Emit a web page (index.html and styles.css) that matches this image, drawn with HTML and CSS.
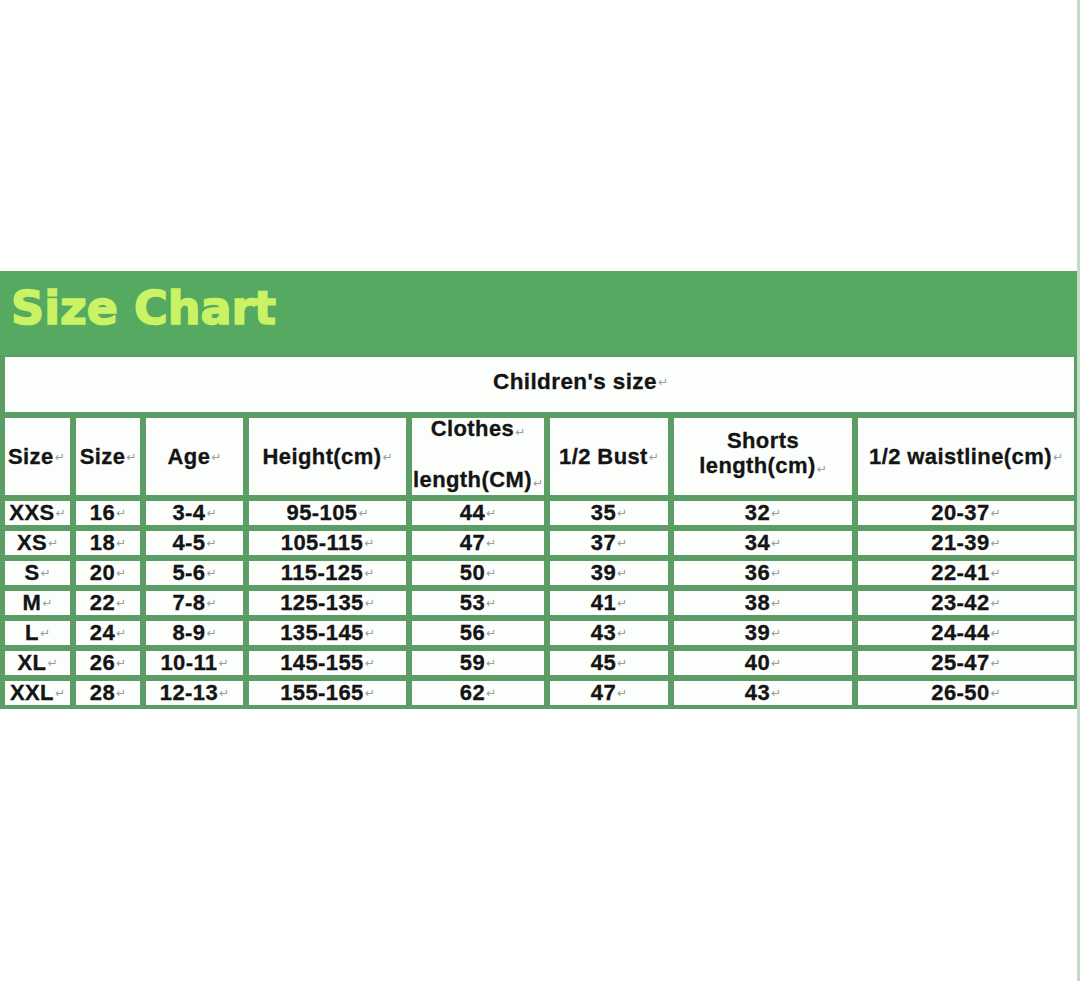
FILE: index.html
```html
<!DOCTYPE html>
<html lang="en">
<head>
<meta charset="utf-8">
<title>Size Chart</title>
<link rel="stylesheet" href="styles.css">
</head>
<body>
<div class="page">
  <main class="sheet">
    <div class="spacer"></div>
    <header class="band"><h1 class="title">Size Chart</h1></header>
    <div class="grid">
      <div class="cell caption">Children's size<span class="pm">↵</span></div>

      <div class="cell head head-left">Size<span class="pm">↵</span></div>
      <div class="cell head">Size<span class="pm">↵</span></div>
      <div class="cell head">Age<span class="pm">↵</span></div>
      <div class="cell head">Height(cm)<span class="pm">↵</span></div>
      <div class="cell head split"><span>Clothes<span class="pm">↵</span></span><span>length(CM)<span class="pm">↵</span></span></div>
      <div class="cell head">1/2 Bust<span class="pm">↵</span></div>
      <div class="cell head stack"><span>Shorts</span><span>length(cm)<span class="pm">↵</span></span></div>
      <div class="cell head">1/2 waistline(cm)<span class="pm">↵</span></div>

      <div class="cell">XXS<span class="pm">↵</span></div><div class="cell">16<span class="pm">↵</span></div><div class="cell">3-4<span class="pm">↵</span></div><div class="cell">95-105<span class="pm">↵</span></div><div class="cell">44<span class="pm">↵</span></div><div class="cell">35<span class="pm">↵</span></div><div class="cell">32<span class="pm">↵</span></div><div class="cell">20-37<span class="pm">↵</span></div>
      <div class="cell">XS<span class="pm">↵</span></div><div class="cell">18<span class="pm">↵</span></div><div class="cell">4-5<span class="pm">↵</span></div><div class="cell">105-115<span class="pm">↵</span></div><div class="cell">47<span class="pm">↵</span></div><div class="cell">37<span class="pm">↵</span></div><div class="cell">34<span class="pm">↵</span></div><div class="cell">21-39<span class="pm">↵</span></div>
      <div class="cell">S<span class="pm">↵</span></div><div class="cell">20<span class="pm">↵</span></div><div class="cell">5-6<span class="pm">↵</span></div><div class="cell">115-125<span class="pm">↵</span></div><div class="cell">50<span class="pm">↵</span></div><div class="cell">39<span class="pm">↵</span></div><div class="cell">36<span class="pm">↵</span></div><div class="cell">22-41<span class="pm">↵</span></div>
      <div class="cell">M<span class="pm">↵</span></div><div class="cell">22<span class="pm">↵</span></div><div class="cell">7-8<span class="pm">↵</span></div><div class="cell">125-135<span class="pm">↵</span></div><div class="cell">53<span class="pm">↵</span></div><div class="cell">41<span class="pm">↵</span></div><div class="cell">38<span class="pm">↵</span></div><div class="cell">23-42<span class="pm">↵</span></div>
      <div class="cell">L<span class="pm">↵</span></div><div class="cell">24<span class="pm">↵</span></div><div class="cell">8-9<span class="pm">↵</span></div><div class="cell">135-145<span class="pm">↵</span></div><div class="cell">56<span class="pm">↵</span></div><div class="cell">43<span class="pm">↵</span></div><div class="cell">39<span class="pm">↵</span></div><div class="cell">24-44<span class="pm">↵</span></div>
      <div class="cell">XL<span class="pm">↵</span></div><div class="cell">26<span class="pm">↵</span></div><div class="cell">10-11<span class="pm">↵</span></div><div class="cell">145-155<span class="pm">↵</span></div><div class="cell">59<span class="pm">↵</span></div><div class="cell">45<span class="pm">↵</span></div><div class="cell">40<span class="pm">↵</span></div><div class="cell">25-47<span class="pm">↵</span></div>
      <div class="cell">XXL<span class="pm">↵</span></div><div class="cell">28<span class="pm">↵</span></div><div class="cell">12-13<span class="pm">↵</span></div><div class="cell">155-165<span class="pm">↵</span></div><div class="cell">62<span class="pm">↵</span></div><div class="cell">47<span class="pm">↵</span></div><div class="cell">43<span class="pm">↵</span></div><div class="cell">26-50<span class="pm">↵</span></div>
    </div>
  </main>
  <div class="edge"></div>
</div>
</body>
</html>
```

FILE: styles.css
```css
html, body {
  margin: 0;
  padding: 0;
  background: #ffffff;
}
body {
  font-family: "Liberation Sans", Arial, sans-serif;
  color: #141414;
}
.page {
  display: flex;
  width: 1080px;
  height: 981px;
  overflow: hidden;
}
.sheet {
  width: 1077px;
  display: flex;
  flex-direction: column;
}
.edge {
  width: 3px;
  background: #c3dcc8;
}
.spacer {
  height: 271px;
  background: #ffffff;
}
.band {
  height: 84px;
  background: #56a961;
  box-sizing: border-box;
  padding: 14px 0 0 11px;
}
.title {
  margin: 0;
  font-family: "DejaVu Sans", sans-serif;
  font-weight: bold;
  font-size: 46px;
  line-height: 46px;
  color: #c9f364;
  -webkit-text-stroke: 1.6px #c9f364;
  letter-spacing: 0;
}
.grid {
  display: grid;
  grid-template-columns: 65px 64px 97px 157px 132px 118px 178px 216px;
  grid-template-rows: 55px 77px repeat(7, 24px);
  gap: 6px;
  padding: 2px 3px 4px 5px;
  background: #5b9d65;
}
.cell {
  background: #fbfefb;
  display: flex;
  align-items: center;
  justify-content: center;
  font-weight: bold;
  font-size: 22px;
  line-height: 24px;
  letter-spacing: 0.4px;
  white-space: nowrap;
  color: #141414;
  -webkit-text-stroke: 0.3px #141414;
}
.caption {
  grid-column: 1 / -1;
  justify-content: flex-start;
  padding: 0 0 6px 488px;
  font-size: 22.5px;
}
.head-left {
  justify-content: flex-start;
  padding-left: 3px;
}
.split {
  flex-direction: column;
  justify-content: space-between;
  line-height: 22px;
  padding: 0 0 1px 0;
}
.stack {
  flex-direction: column;
  line-height: 25px;
  padding-bottom: 4px;
}
.pm {
  font-family: "DejaVu Sans", sans-serif;
  font-weight: normal;
  font-size: 12px;
  color: #9c9c9c;
  -webkit-text-stroke: 0;
  letter-spacing: 0;
  margin-left: 1px;
}
```
